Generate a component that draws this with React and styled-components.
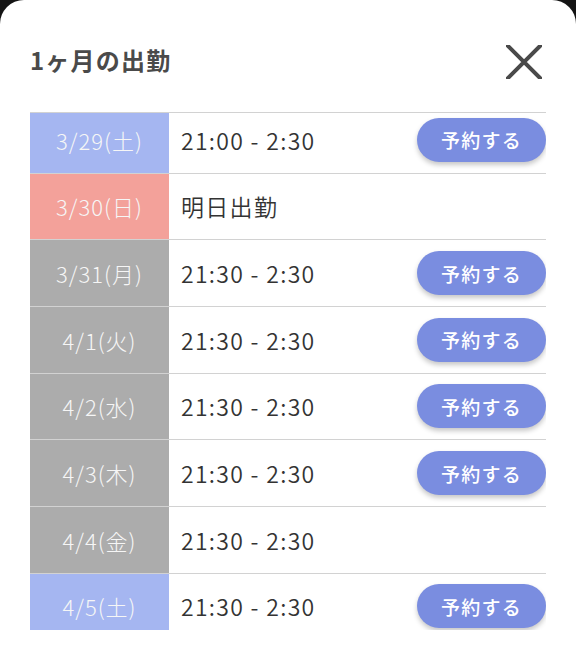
import React from "react";
import styled, { createGlobalStyle } from "styled-components";

const Global = createGlobalStyle`
  html, body { margin: 0; padding: 0; background: #141414; }
  body { font-family: "Noto Sans CJK JP", "Noto Sans", sans-serif; }
  * { box-sizing: border-box; }
`;

const Sheet = styled.div`
  width: 576px;
  height: 671px;
  background: #ffffff;
  border-radius: 24px 24px 0 0;
  padding: 0 30px;
  overflow: hidden;
`;

const Header = styled.div`
  height: 112px;
  display: flex;
  align-items: center;
  justify-content: space-between;
  padding-top: 6px;
`;

const Title = styled.h2`
  margin: 0;
  font-size: 24px;
  font-weight: 700;
  color: #4a4a4a;
  letter-spacing: 1.2px;
`;

const CloseButton = styled.button`
  border: 0;
  background: none;
  padding: 0;
  width: 36px;
  height: 36px;
  margin-right: 4px;
  margin-top: 6px;
  display: flex;
  align-items: center;
  justify-content: center;
  cursor: pointer;
`;

const Viewport = styled.div`
  height: 518px;
  overflow: hidden;
  border-top: 1px solid #d2d2d2;
`;

const List = styled.div`
  margin-top: -6px;
`;

const Row = styled.div`
  display: flex;
  align-items: stretch;
  height: 66.67px;
  border-bottom: 1px solid #d2d2d2;
`;

const colors = {
  sat: "#a5b6f1",
  sun: "#f3a19a",
  weekday: "#acacac",
};

const DateCell = styled.div`
  width: 139px;
  flex: none;
  background: ${(p) => colors[p.$kind]};
  color: #f6f6f6;
  font-size: 22px;
  font-weight: 300;
  letter-spacing: 1px;
  display: flex;
  align-items: center;
  justify-content: center;
`;

const TimeCell = styled.div`
  flex: 1;
  display: flex;
  align-items: center;
  justify-content: space-between;
  padding-left: 12px;
  color: #333333;
  font-size: 23px;
  font-weight: 350;
  letter-spacing: 1.3px;
`;

const ReserveButton = styled.button`
  width: 129px;
  height: 44px;
  border: 0;
  border-radius: 22px;
  background: #7a8de0;
  color: #ffffff;
  font-family: "Noto Sans CJK JP", sans-serif;
  font-size: 19px;
  font-weight: 500;
  letter-spacing: 1.2px;
  box-shadow: 0 3px 5px rgba(0, 0, 0, 0.22);
  cursor: pointer;
`;

const rows = [
  { date: "3/29(土)", kind: "sat", time: "21:00 - 2:30", book: true },
  { date: "3/30(日)", kind: "sun", time: "明日出勤", book: false },
  { date: "3/31(月)", kind: "weekday", time: "21:30 - 2:30", book: true },
  { date: "4/1(火)", kind: "weekday", time: "21:30 - 2:30", book: true },
  { date: "4/2(水)", kind: "weekday", time: "21:30 - 2:30", book: true },
  { date: "4/3(木)", kind: "weekday", time: "21:30 - 2:30", book: true },
  { date: "4/4(金)", kind: "weekday", time: "21:30 - 2:30", book: false },
  { date: "4/5(土)", kind: "sat", time: "21:30 - 2:30", book: true },
];

export default function App() {
  return (
    <>
      <Global />
      <Sheet>
        <Header>
          <Title>1ヶ月の出勤</Title>
          <CloseButton aria-label="閉じる">
            <svg width="36" height="34" viewBox="0 0 36 34">
              <path
                d="M2 1 L34 33 M34 1 L2 33"
                stroke="#4a4a4a"
                strokeWidth="4"
                strokeLinecap="square"
              />
            </svg>
          </CloseButton>
        </Header>
        <Viewport>
          <List>
            {rows.map((r) => (
              <Row key={r.date}>
                <DateCell $kind={r.kind}>{r.date}</DateCell>
                <TimeCell>
                  <span>{r.time}</span>
                  {r.book && <ReserveButton>予約する</ReserveButton>}
                </TimeCell>
              </Row>
            ))}
          </List>
        </Viewport>
      </Sheet>
    </>
  );
}
